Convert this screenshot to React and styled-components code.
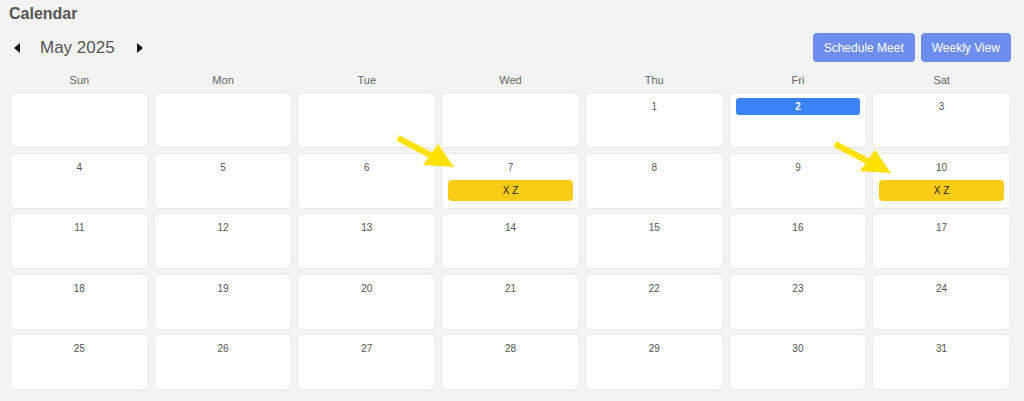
import styled, { createGlobalStyle } from "styled-components";

const GlobalStyle = createGlobalStyle`
  body {
    margin: 0;
    background: #f3f3f3;
    font-family: "Liberation Sans", Arial, sans-serif;
  }
`;

const Page = styled.div`
  position: relative;
  padding: 5px 13px 10px 10px;
`;

const Title = styled.h2`
  margin: 0 0 0 -1px;
  font-size: 16px;
  line-height: 18px;
  font-weight: bold;
  color: #555;
`;

const Toolbar = styled.div`
  display: flex;
  justify-content: space-between;
  align-items: center;
  margin-top: 10px;
  height: 29px;
`;

const MonthNav = styled.div`
  display: flex;
  align-items: center;
`;

const NavArrow = styled.button`
  display: flex;
  align-items: center;
  justify-content: center;
  width: 14px;
  height: 20px;
  padding: 0;
  margin: ${(p) => (p.$next ? "0 0 0 18px" : "0 16px 0 0")};
  border: none;
  background: none;
  cursor: pointer;
`;

const MonthLabel = styled.span`
  font-size: 17px;
  color: #555;
`;

const Actions = styled.div`
  display: flex;
  gap: 6px;
`;

const ActionButton = styled.button`
  height: 29px;
  padding: 0 11px;
  border: none;
  border-radius: 4px;
  background: #6d8ef0;
  color: #fff;
  font-family: inherit;
  font-size: 12px;
  cursor: pointer;
`;

const WeekDays = styled.div`
  display: grid;
  grid-template-columns: repeat(7, 1fr);
  column-gap: 5px;
  margin-top: 11px;
`;

const WeekDay = styled.div`
  text-align: center;
  font-size: 11px;
  line-height: 14px;
  color: #666;
`;

const Grid = styled.div`
  display: grid;
  grid-template-columns: repeat(7, 1fr);
  grid-auto-rows: 56px;
  column-gap: 5px;
  row-gap: 4.6px;
  margin-top: 5px;
`;

const Cell = styled.div`
  display: flex;
  flex-direction: column;
  gap: 4px;
  padding: 5px 6px;
  background: #fff;
  border: 1px solid #ebebeb;
  border-radius: 6px;
  box-sizing: border-box;
`;

const DateLabel = styled.div`
  height: 17px;
  line-height: 17px;
  text-align: center;
  font-size: 10px;
  border-radius: 3px;
  color: ${(p) => (p.$today ? "#fff" : "#555")};
  background: ${(p) => (p.$today ? "#3b82f6" : "transparent")};
  font-weight: ${(p) => (p.$today ? "bold" : "normal")};
`;

const EventBar = styled.div`
  height: 21px;
  line-height: 21px;
  text-align: center;
  font-size: 10px;
  color: #222;
  background: #facc15;
  border-radius: 4px;
`;

const Pointer = styled.svg`
  position: absolute;
  pointer-events: none;
`;

const weekDays = ["Sun", "Mon", "Tue", "Wed", "Thu", "Fri", "Sat"];
const events = { 7: "X Z", 10: "X Z" };
const today = 2;
const leading = 4;
const daysInMonth = 31;

function Triangle({ left }) {
  return (
    <svg width="6" height="10" viewBox="0 0 6 10">
      <path d={left ? "M6 0 L0 5 L6 10 Z" : "M0 0 L6 5 L0 10 Z"} fill="#111" />
    </svg>
  );
}

function Arrow({ left, top }) {
  return (
    <Pointer width="62" height="36" viewBox="0 0 62 36" style={{ left, top }}>
      <line x1="2" y1="3" x2="38" y2="22" stroke="#ffe100" strokeWidth="6" />
      <path d="M27 30 L42 9 L58 32 Z" fill="#ffe100" />
    </Pointer>
  );
}

function App() {
  const cells = [];
  for (let i = 0; i < leading; i++) cells.push(null);
  for (let d = 1; d <= daysInMonth; d++) cells.push(d);

  return (
    <Page>
      <GlobalStyle />
      <Title>Calendar</Title>
      <Toolbar>
        <MonthNav>
          <NavArrow aria-label="previous month">
            <Triangle left />
          </NavArrow>
          <MonthLabel>May 2025</MonthLabel>
          <NavArrow $next aria-label="next month">
            <Triangle />
          </NavArrow>
        </MonthNav>
        <Actions>
          <ActionButton>Schedule Meet</ActionButton>
          <ActionButton>Weekly View</ActionButton>
        </Actions>
      </Toolbar>
      <WeekDays>
        {weekDays.map((d) => (
          <WeekDay key={d}>{d}</WeekDay>
        ))}
      </WeekDays>
      <Grid>
        {cells.map((d, i) => (
          <Cell key={i}>
            {d && <DateLabel $today={d === today}>{d}</DateLabel>}
            {d && events[d] && <EventBar>{events[d]}</EventBar>}
          </Cell>
        ))}
      </Grid>
      <Arrow left={396} top={135} />
      <Arrow left={833} top={141} />
    </Page>
  );
}

export default App;
